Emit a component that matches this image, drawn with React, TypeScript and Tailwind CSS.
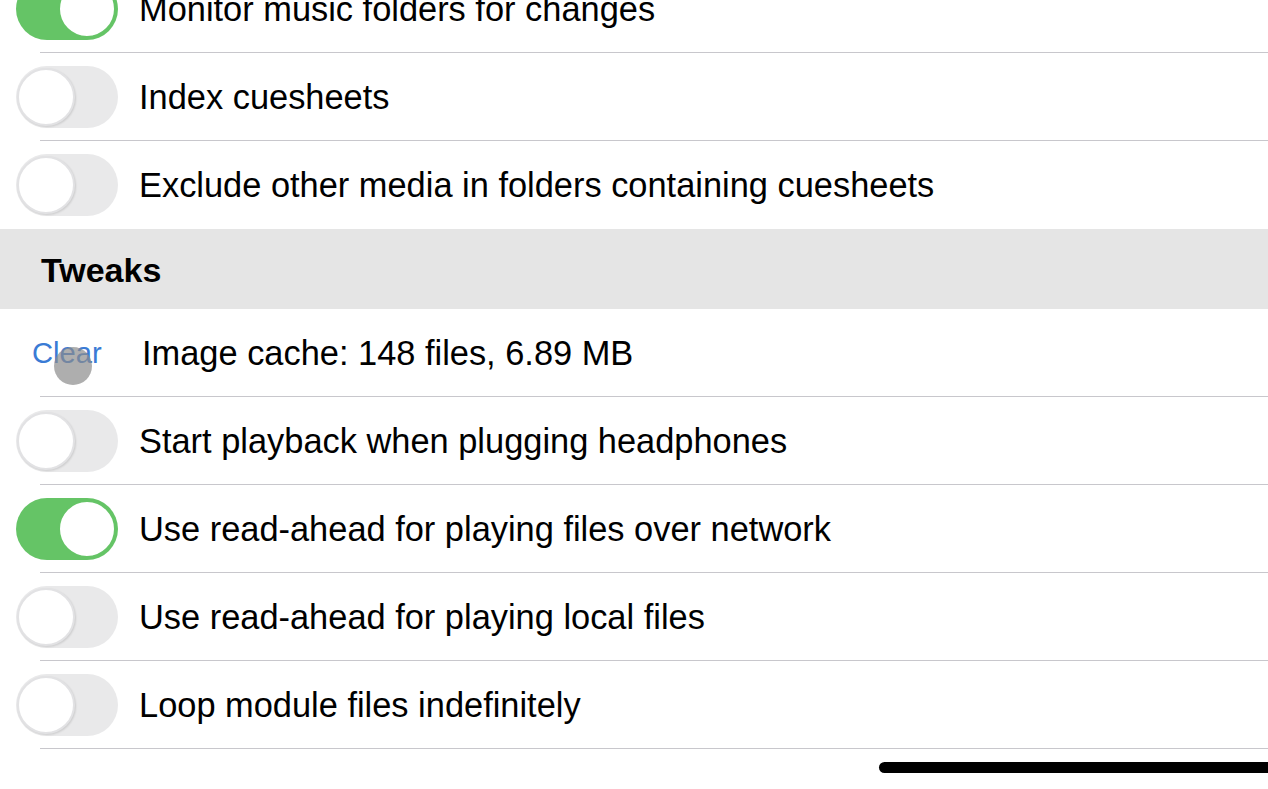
import React from "react";

function Toggle({ on }: { on: boolean }) {
  return on ? (
    <div className="relative w-[102px] h-[62px] rounded-full bg-[#65c466] shrink-0">
      <div className="absolute right-[2px] top-[2px] w-[58px] h-[58px] rounded-full bg-white border-[2px] border-[#65c466]" />
    </div>
  ) : (
    <div className="relative w-[102px] h-[62px] rounded-full bg-[#e9e9ea] shrink-0">
      <div className="absolute left-[1px] top-[2px] w-[58px] h-[58px] rounded-full bg-white border-[2px] border-[#e2e2e4] shadow-[1px_1px_2px_rgba(0,0,0,0.12)]" />
    </div>
  );
}

function Row({ on, label }: { on: boolean; label: string }) {
  return (
    <div className="flex flex-col">
      <div className="h-[87px] flex items-center pl-[16px]">
        <Toggle on={on} />
        <span className="ml-[21px] mt-[2px] text-[34.4px] text-black">{label}</span>
      </div>
      <div className="ml-[40px] h-px bg-[#c8c7cc]" />
    </div>
  );
}

export default function App() {
  return (
    <div
      className="w-[1268px] h-[789px] overflow-hidden bg-white relative"
      style={{ fontFamily: '"Liberation Sans", Arial, sans-serif' }}
    >
      <div className="flex flex-col mt-[-35px]">
        <Row on={true} label="Monitor music folders for changes" />
        <Row on={false} label="Index cuesheets" />
        <div className="h-[88px] flex items-center pl-[16px]">
          <Toggle on={false} />
          <span className="ml-[21px] mt-[2px] text-[34.4px] text-black">Exclude other media in folders containing cuesheets</span>
        </div>
        <div className="h-[80px] bg-[#e5e5e5] flex items-center pl-[41px]">
          <span className="mt-[2px] text-[34px] font-bold text-black">Tweaks</span>
        </div>
        <div className="flex flex-col">
          <div className="h-[87px] flex items-center">
            <div className="relative w-[142px] pl-[32px] mt-[2px]">
              <span className="text-[29.2px] text-[#3a7bd5]">Clear</span>
              <div className="absolute left-[54px] top-[15px] w-[38px] h-[38px] rounded-full bg-[rgba(140,140,140,0.7)]" />
            </div>
            <span className="mt-[2px] text-[34.4px] text-black">Image cache: 148 files, 6.89 MB</span>
          </div>
          <div className="ml-[40px] h-px bg-[#c8c7cc]" />
        </div>
        <Row on={false} label="Start playback when plugging headphones" />
        <Row on={true} label="Use read-ahead for playing files over network" />
        <Row on={false} label="Use read-ahead for playing local files" />
        <Row on={false} label="Loop module files indefinitely" />
      </div>
      <div className="absolute left-[879px] top-[762px] w-[420px] h-[11px] rounded-full bg-black" />
    </div>
  );
}
